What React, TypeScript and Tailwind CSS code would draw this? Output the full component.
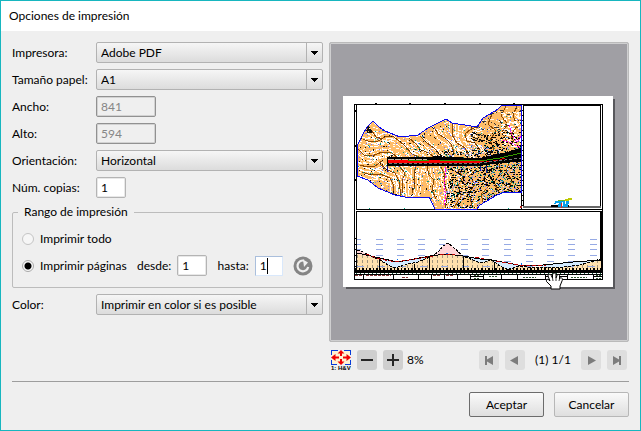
import { useState } from 'react';
import type { ReactNode } from 'react';

const fieldClass =
  'h-[21px] rounded-[2px] border border-[#b4b4b4] bg-white px-1 text-[12px] leading-4 text-black outline-none shadow-[inset_0_0_0_1px_#e8e8e8]';

const disabledFieldClass =
  'h-[21px] w-[60px] rounded-[2px] border border-[#919191] bg-[#efefef] px-1 text-[12px] leading-4 text-[#868686] shadow-[inset_0_0_0_1px_#d2d2d2]';

function SelectField({ id, options }: { id: string; options: string[] }) {
  return (
    <div className="relative">
      <select
        id={id}
        className="block h-[21px] w-full appearance-none rounded-[2px] border border-[#b2b2b2] bg-linear-to-b from-[#f6f6f6] to-[#dcdcdc] pl-1 pr-5 text-[12px] leading-4 text-black outline-none"
      >
        {options.map((option) => (
          <option key={option}>{option}</option>
        ))}
      </select>
      <span className="pointer-events-none absolute inset-y-px right-px flex w-4 items-center justify-center border-l border-[#b2b2b2]">
        <svg viewBox="0 0 7 4" className="h-1 w-[7px]" shapeRendering="crispEdges">
          <path d="M0 0h7v1h-1v1h-1v1h-1v1h-1v-1h-1v-1h-1v-1h-1z" />
        </svg>
      </span>
    </div>
  );
}

function Radio({ id, label, checked, onChange }: { id: string; label: string; checked: boolean; onChange: () => void }) {
  return (
    <div className="flex items-center gap-1.5">
      <input
        id={id}
        type="radio"
        name="range"
        checked={checked}
        onChange={onChange}
        className="size-3 appearance-none rounded-full border border-[#c4c4c4] bg-[#f6f6f6] checked:border-[#a9a9a9] checked:bg-[radial-gradient(circle,#000_3px,#f8f8f8_4px)]"
      />
      <label htmlFor={id}>{label}</label>
    </div>
  );
}

function ToolButton({ label, disabled, children }: { label: string; disabled?: boolean; children: ReactNode }) {
  return (
    <button
      type="button"
      aria-label={label}
      disabled={disabled}
      className="flex size-5 items-center justify-center rounded-[3px] bg-[#cfcfcf] text-[#262626] disabled:bg-[#dedede] disabled:text-[#7c7c7c]"
    >
      <svg viewBox="0 0 20 20" className="size-5" fill="currentColor">
        {children}
      </svg>
    </button>
  );
}

// Small seeded generator so the drawing is the same on every render
function makeRandom(seed: number) {
  let s = seed;
  return () => {
    s = (s * 48271) % 2147483647;
    return s / 2147483647;
  };
}

function scatter(seed: number, count: number, x: number, y: number, w: number, h: number, run = 1) {
  const random = makeRandom(seed * 7919);
  let d = '';
  for (let i = 0; i < count; i++) {
    const px = x + Math.floor(random() * w);
    const py = y + Math.floor(random() * h);
    const len = 1 + Math.floor(random() * run);
    d += `M${px} ${py}h${len}v1h-${len}z`;
  }
  return d;
}

const terrain =
  'M14 50L19 40L24 31L30 25L36 31L42 35L57 41L75 39L85 32L97 26L103 23L109 27L134 31L140 22L147 18L155 13L159 9H178V96H162L154 99L142 106L137 109L134 113H92L86 101L67 102L52 99L35 92L25 84L14 80z';

const contours = [
  'M20 43l7 3l8-1l9-5l7 1l10 8l8 9l9 4',
  'M15 53l6 6l8 1l10-4l9 0l7 6l5 5',
  'M17 69l7 2l8-1l7-5',
  'M24 32l5 3l4 6l7 2',
  'M66 42l7 6l5 6l8 3l6 5',
  'M77 40l7 7l7 5l7 8',
  'M91 31l4 7l7 4l6 6l3 9',
  'M109 27v12l5 8l8 5l4 8',
  'M136 30l-8 3l-6 5l2 7l8 2l5 7',
  'M19 76l9 3l9-1l10 4l3 6v12',
  'M37 68l7 6l8 3l4 8l2 15',
  'M56 70l6 7l-3 8l1 12',
  'M73 70l-2 8l1 11l-3 8',
  'M84 70l2 9l5 5l-2 10l4 9',
  'M98 71l4 8l-1 10l4 8l-3 15',
  'M115 73l5 8l-5 9l3 10l-7 12',
  'M134 72l-8 8l6 8l-6 9l3 13',
  'M145 73l-5 10l6 7l-8 8l2 8',
  'M156 68l2 9l-7 9l5 11',
  'M166 67l-3 9l6 8l-4 12',
  'M149 18l-4 10l8 7l-6 9l4 10',
  'M163 10l-5 10l7 8l-6 8l5 10',
  'M174 10l-4 9l4 11l-6 9l5 12',
];

const dashStarts = [14, 33, 54, 75, 96, 118, 139, 161, 183, 204, 225, 247];
const dashes = dashStarts
  .flatMap((x) => [143, 148, 153, 159, 165, 170].map((y) => `M${x} ${y}h${x === 14 ? 4 : 7}v1h-${x === 14 ? 4 : 7}z`))
  .join('');

const ground =
  '14,154 20,156 30,161 37,164 45,169 52,172 65,168 75,166 87,161 95,156 100,150 105,147 110,151 120,160 130,164 138,167 149,164 157,170 165,174 175,170 185,171 220,171 237,169 258,163';
const design = '14,157 37,162 54,166 66,164 87,160 103,158 120,160 137,163 149,164 175,169 200,169 230,166 258,164';

function Plan() {
  return (
    <g>
      <clipPath id="terrain">
        <path d={terrain} />
      </clipPath>
      <g clipPath="url(#terrain)">
        <path d={terrain} fill="#ffbd68" />
        <path d={scatter(12, 330, 100, 9, 78, 104, 2)} fill="#fff3df" />
        <g fill="none" stroke="#fff" strokeWidth="1" strokeDasharray="5 1">
          {contours.slice(0, 15).map((d) => (
            <g key={d}>
              <path d={d} transform="translate(3 2)" />
              <path d={d} transform="translate(0 5)" />
              <path d={d} transform="translate(6 3)" />
              <path d={d} transform="translate(-3 -3)" />
            </g>
          ))}
        </g>
        <path d={scatter(7, 800, 14, 9, 120, 104, 2)} fill="#fff" />
        <g fill="none" stroke="#8c4700" strokeWidth="1">
          {contours.map((d) => (
            <path key={d} d={d} />
          ))}
        </g>
        <path d={scatter(3, 240, 14, 20, 90, 92)} fill="#111" />
        <path d={scatter(31, 320, 14, 20, 164, 92)} fill="#7174ff" />
        <path d={scatter(9, 240, 14, 20, 164, 92)} fill="#009c91" />
        <path d={scatter(21, 560, 104, 70, 74, 42, 2)} fill="#050505" />
        <path d={scatter(22, 300, 128, 36, 50, 34, 2)} fill="#050505" />
        <path d={scatter(28, 110, 128, 10, 50, 35, 2)} fill="#333" />
        <path d={scatter(45, 300, 104, 50, 74, 62)} fill="#9094ff" />
        <path d={scatter(60, 260, 104, 50, 74, 62)} fill="#008675" />
        <path d={scatter(61, 100, 92, 54, 86, 9, 2)} fill="#111" />
        <path d={scatter(64, 130, 158, 16, 20, 35, 3)} fill="#fff" />
        <path d="M102 71v12l-1 8l2 9l-2 9M166 29l3 10l5 7l4-6M160 44l9 3l8 5" fill="none" stroke="#f0e" strokeDasharray="2 1" />
        <path d={scatter(70, 30, 23, 31, 5, 6, 2)} fill="#111" />
      </g>
      <path d={terrain} fill="none" stroke="#0808ee" strokeWidth="1" />
      <path d="M44 61H85L94 60L103 61L137 62L150 59L164 56L178 52V66L157 67L137 70H44z" fill="#000" />
      <path d="M45 63H84" stroke="#c9b9a4" strokeDasharray="6 1" fill="none" />
      <path d="M45 65H96L137 66" stroke="#f00" strokeWidth="3" fill="none" />
      <path d="M65 64H86M96 64L137 65L157 62L178 57" stroke="#359800" strokeWidth="1" fill="none" />
      <path d="M87 66H130L150 65L164 62" stroke="#e40000" strokeDasharray="5 2" fill="none" />
      <path d="M46 67H137L178 62" stroke="#777" strokeDasharray="3 2" fill="none" />
      <path d="M44 70v6M143 70v7M137 70v5" stroke="#171797" />
    </g>
  );
}

function Profile() {
  return (
    <g>
      <path d={dashes} fill="#96aae5" />
      <polygon points={`14,176 ${ground} 258,176`} fill="#ffe0ae" />
      <polygon points="87,161 95,156 100,150 105,147 110,151 120,160 103,158" fill="#ffd5d8" />
      <polygon points="14,154 20,156 33,162 14,158" fill="#ffd5d8" />
      <polygon points="37,162 54,166 66,164 87,160 75,166 65,168 52,172 45,169" fill="#d3eaff" />
      <polygon points="120,160 137,163 149,164 138,167 130,164" fill="#d3eaff" />
      <polygon points="149,164 175,169 200,169 230,166 258,164 237,169 220,171 175,170 165,174 157,170" fill="#d3eaff" />
      <clipPath id="ground">
        <polygon points={`14,176 ${ground} 258,176`} />
      </clipPath>
      <g clipPath="url(#ground)">
        <path d="M14 160H258M14 165H258M14 170H258" stroke="#a2957e" strokeWidth="3" strokeDasharray="1 4" />
        <path d="M14 170H258" stroke="#96aae5" strokeDasharray="7 14" />
      </g>
      <path d="M36.5 163V176M71.5 168V176M86.5 161V176M120.5 160V176M151.5 166V176" stroke="#000" />
      <polyline points={design} fill="none" stroke="#000" />
      <polyline points={ground} fill="none" stroke="#000" strokeDasharray="3 1" />
      <path d="M23 158L37 163L53 166L72 163L90 160M97 158H112M132 161L141 163M153 165L175 169L203 169" fill="none" stroke="#b80000" strokeDasharray="4 2" />
      <path d="M54 163h1v1h-1zM103 157h2v1h-2zM178 167h1v2h-1z" fill="#0878ef" />
      <path d="M11 175.5H259" stroke="#000" strokeWidth="3" />
      <path d="M12 173H259" stroke="#000" strokeWidth="2" strokeDasharray="2 2 1 2" />
      <path d="M13 177.5H259" stroke="#165b3d" strokeDasharray="1 3" />
      <g fill="none" stroke="#000">
        <path d="M11.5 178.5H259.5V183.5H11.5z" />
        <path d="M20.5 178v5M50.5 178v5M75.5 178v5M88.5 178v5M101.5 178v5M114.5 178v5M127.5 178v5M140.5 178v5M158.5 178v5M174.5 178v5M202.5 178v5M224.5 178v5M250.5 178v5" />
        <path d="M128 180.5h12M203 180.5h21M251 180.5h8" />
      </g>
      <path d="M12 179.5h7M23 179.5h25M59 181.5h6M90 179.5h8M103 179.5h8" stroke="#833737" strokeDasharray="3 1" />
      <path d="M131 179.5h6M131 182.5h6M146 180.5h8M180 181.5h13M228 181.5h16M253 179.5h5M253 182.5h5" stroke="#325633" strokeDasharray="2 1" />
    </g>
  );
}

function Hand() {
  return (
    <g shapeRendering="geometricPrecision">
      <path
        d="M208 193V190L203.5 185.5C203 183 205 182.5 207 185L205 180C205 177.5 208 178 208.5 180L209.5 182V179C210 176.5 213 176.5 213 179V182L214 179.5C215 177.5 217 178.5 216.5 181V183L217 182C219 181 220 183 219 185L217 190V193z"
        fill="#fff"
        stroke="#000"
        strokeWidth="1"
      />
      <path d="M209.5 182l.5 3M213 182v3M216.5 183l-.5 2" stroke="#000" strokeWidth="0.8" />
    </g>
  );
}

function Sheet() {
  return (
    <svg viewBox="0 0 272 193" className="block w-[272px] overflow-visible" role="img" aria-label="Vista previa" shapeRendering="crispEdges">
      <path d="M3 3H272V193H3z" fill="#58585c" />
      <path d="M0 0H270V191H0z" fill="#fff" />
      <g fill="none" stroke="#000">
        <path d="M11.5 8.5H259.5V183.5H11.5z" />
        <path d="M13.5 9V113.5H259M178.5 9V113" />
        <path d="M13.5 177V115.5H259" />
        <path d="M258 115V177" strokeWidth="2" />
        <path d="M180.5 9.5H257.5V111" />
        <path d="M180.5 9V111" />
      </g>
      <path d="M180 110H258V112H180z" fill="#686868" />
      <path d="M12 14h2v2h-2zM12 49h2v2h-2zM12 83h2v2h-2zM12 142h1v1h-1zM12 148h1v1h-1zM12 153h1v1h-1zM12 159h1v1h-1zM12 165h1v1h-1zM12 170h1v1h-1zM32 7h2v1h-2zM66 7h2v1h-2zM101 7h2v1h-2zM136 7h2v1h-2zM170 7h2v1h-2z" />
      <path d="M179.5 14V110" stroke="#000" strokeDasharray="1 4" />
      <path d="M26 112h1v1h-1zM61 112h1v1h-1zM165 112h1v1h-1z" fill="#00a27d" />
      <path d="M177 110h2v2h-2z" fill="#a52018" />
      <Plan />
      <Profile />
      <path d="M208 109h18v2h-18z" />
      <path d="M212 105h14v3h-1v3h-10v-3h-4v-1h1z" fill="#08a1e8" />
      <path d="M213 107h3v1h-3zM219 106h1v4h-1zM222 105h1v3h-1z" fill="#fff" />
      <path d="M215 105h7v-1h7v-1h-5v1h-9z" fill="#70bb20" />
      <path d="M222 104l7-1" stroke="#bdc900" strokeWidth="2" />
      <path d="M218 107v5" stroke="#e22525" />
      <Hand />
    </svg>
  );
}

function FitIcon() {
  return (
    <svg viewBox="0 0 20 20" className="size-5" shapeRendering="crispEdges">
      <path d="M1 1H19V14H1z" fill="#fff2d1" />
      <path d="M0 0H7V1H1V5H0zM13 0H20V5H19V1H13zM0 10H1V14H6V15H0zM19 10H20V15H14V14H19z" fill="#063bd9" />
      <path
        d="M10 0L13.5 3.5H11V6H9V3.5H6.5zM10 15L13.5 11.5H11V9H9V11.5H6.500zM0 7.5L4.5 4V6.5H8V8.5H4.5V11zM20 7.5L15.5 4V6.5H12V8.5H15.5V11z"
        fill="#f00000"
        shapeRendering="geometricPrecision"
      />
      <text x="0" y="20" fontSize="6" fontWeight="bold" fontFamily="Liberation Sans, sans-serif">
        1: H&amp;V
      </text>
    </svg>
  );
}

export default function App() {
  const [range, setRange] = useState('pages');

  return (
    <div className="flex min-h-screen flex-col border border-[#17b6bf] bg-[#efefef] font-[Lato,sans-serif] text-[12px] leading-4 text-black">
      <header className="bg-white px-2 pt-[7px] pb-[7px]">
        <h1>Opciones de impresión</h1>
      </header>

      <form className="flex flex-col px-[11px] pt-[11px]" onSubmit={(e) => e.preventDefault()}>
        <div className="grid grid-cols-[311fr_300fr] gap-1.5">
          <div className="grid auto-rows-min grid-cols-[84px_1fr] items-center gap-y-1.5">
            <label htmlFor="printer">Impresora:</label>
            <SelectField id="printer" options={['Adobe PDF']} />
            <label htmlFor="paper" className="whitespace-nowrap">Tamaño papel:</label>
            <SelectField id="paper" options={['A1', 'A2', 'A3', 'A4']} />
            <label htmlFor="width">Ancho:</label>
            <input id="width" className={disabledFieldClass} defaultValue="841" disabled />
            <label htmlFor="height">Alto:</label>
            <input id="height" className={disabledFieldClass} defaultValue="594" disabled />
            <label htmlFor="orientation">Orientación:</label>
            <SelectField id="orientation" options={['Horizontal', 'Vertical']} />
            <label htmlFor="copies">Núm. copias:</label>
            <input id="copies" className={`${fieldClass} w-[30px]`} defaultValue="1" />

            <fieldset className="col-span-2 min-w-0 rounded-[2px] border border-[#bcbcbc] px-[9px] pb-[11px]">
              <legend className="-ml-1 px-1.5">Rango de impresión</legend>
              <div className="flex flex-col gap-1.5 pt-2">
                <div className="flex h-[21px] items-center">
                  <Radio id="all" label="Imprimir todo" checked={range === 'all'} onChange={() => setRange('all')} />
                </div>
                <div className="flex h-[21px] items-center justify-between whitespace-nowrap">
                  <Radio id="pages" label="Imprimir páginas" checked={range === 'pages'} onChange={() => setRange('pages')} />
                  <div className="flex items-center gap-1.5">
                    <label htmlFor="from">desde:</label>
                    <input id="from" className={`${fieldClass} w-[30px]`} defaultValue="1" />
                  </div>
                  <div className="flex items-center gap-1.5">
                    <label htmlFor="to">hasta:</label>
                    <div className="relative">
                      <input
                        id="to"
                        className="block h-5 w-7 border border-[#d9e8fb] border-t-[#aabfdc] border-l-[#aabfdc] bg-white px-1 text-[12px] leading-4 outline-none"
                        defaultValue="1"
                      />
                      <span className="pointer-events-none absolute top-0.5 left-3 h-4 w-px bg-black" />
                    </div>
                  </div>
                  <button type="button" aria-label="Actualizar">
                    <svg viewBox="0 0 20 20" className="size-5">
                      <circle cx="10" cy="10" r="9.5" fill="#858585" />
                      <path d="M11 4.6A5.4 5.4 0 1 0 15.2 11" fill="none" stroke="#efefef" strokeWidth="2.2" />
                      <path d="M10 3.5L15 6.5L11 11z" fill="#efefef" />
                    </svg>
                  </button>
                </div>
              </div>
            </fieldset>

            <label htmlFor="color">Color:</label>
            <SelectField id="color" options={['Imprimir en color si es posible']} />
          </div>

          <div className="min-w-0">
            <div className="flex aspect-square items-center justify-center rounded-[2px] border border-[#bababa] bg-[#a09fa4] shadow-[inset_0_0_0_1px_#cfcfd0]">
              <Sheet />
            </div>
            <div className="mt-2 flex items-center justify-between px-0.5">
              <div className="flex items-center gap-1.5">
                <button type="button" aria-label="Ajustar vista">
                  <FitIcon />
                </button>
                <ToolButton label="Alejar">
                  <path d="M4 9h12v2H4z" />
                </ToolButton>
                <ToolButton label="Acercar">
                  <path d="M4 9h5V4h2v5h5v2h-5v5H9v-5H4z" />
                </ToolButton>
                <span className="-ml-0.5">8%</span>
              </div>
              <div className="flex items-center gap-1.5">
                <ToolButton label="Primera página" disabled>
                  <path d="M6 6h2v3.5L14 6v9l-6-3.5V15H6z" />
                </ToolButton>
                <ToolButton label="Página anterior" disabled>
                  <path d="M5 10.5L13 6v9z" />
                </ToolButton>
                <span className="w-11 text-center">(1) 1/1</span>
                <ToolButton label="Página siguiente" disabled>
                  <path d="M15 10.5L7 6v9z" />
                </ToolButton>
                <ToolButton label="Última página" disabled>
                  <path d="M14 6h-2v3.5L6 6v9l6-3.5V15h2z" />
                </ToolButton>
              </div>
            </div>
          </div>
        </div>

        <hr className="mt-[11px] border-[#9d9d9d]" />

        <div className="flex justify-end gap-2.5 pt-2.5">
          <button
            type="submit"
            className="h-[25px] w-[75px] rounded-[2px] border border-[#6c6c6c] bg-linear-to-b from-[#fafafa] to-[#dfdfdf]"
          >
            Aceptar
          </button>
          <button
            type="button"
            className="h-[25px] w-[75px] rounded-[2px] border border-[#b7b7b7] bg-linear-to-b from-[#fafafa] to-[#dfdfdf]"
          >
            Cancelar
          </button>
        </div>
      </form>
    </div>
  );
}
